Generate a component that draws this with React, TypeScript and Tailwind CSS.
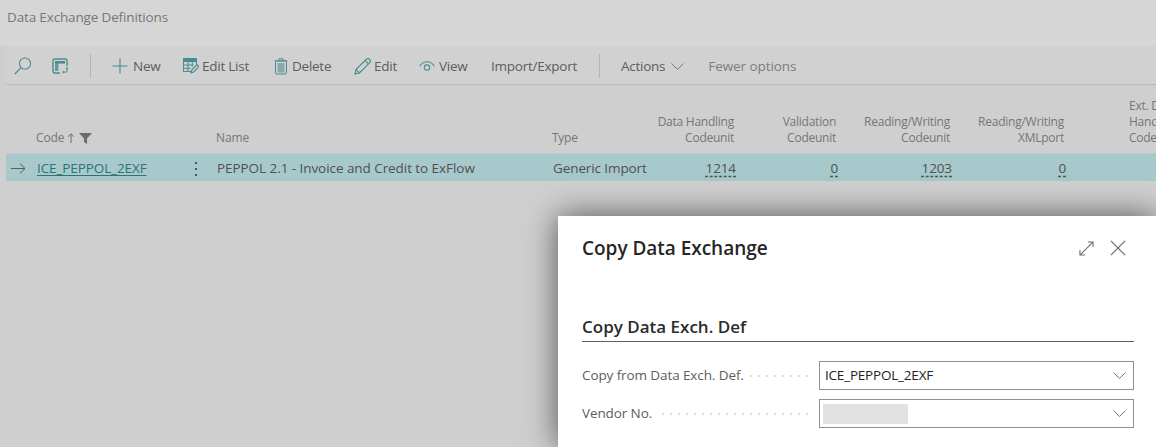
import React from "react";

const teal = "#4b8c90";

function Search() {
  return (
    <svg width="18" height="18" viewBox="0 0 18 18" fill="none" stroke={teal} strokeWidth="1.1">
      <circle cx="11" cy="6.6" r="5.6" />
      <path d="M7 10.6 L0.8 17" strokeWidth="1.3" />
    </svg>
  );
}
function Layout() {
  return (
    <svg width="16" height="16" viewBox="0 0 16 16" fill="none" stroke={teal} strokeWidth="1.4">
      <path d="M8 15H2.5A1.5 1.5 0 0 1 1 13.5v-11A1.5 1.5 0 0 1 2.5 1h11A1.5 1.5 0 0 1 15 2.5V8" />
      <rect x="3" y="3" width="10" height="2.6" fill={teal} stroke="none" />
      <rect x="3" y="3" width="3.4" height="10" fill={teal} stroke="none" opacity="0.8" />
      <path d="M15 9.5v3.6a1 1 0 0 1-1 1h-3M13.8 11l1.2-1.5 1 1.5M11.8 13l-1.3 1.1 1.3 1.1" strokeWidth="1" />
    </svg>
  );
}
function Plus() {
  return (
    <svg width="16" height="16" viewBox="0 0 16 16" stroke={teal} strokeWidth="1.1">
      <path d="M8 0.5V15.5M0.5 8H15.5" />
    </svg>
  );
}
function EditList() {
  return (
    <svg width="16" height="16" viewBox="0 0 16 16" fill="none" stroke={teal} strokeWidth="1">
      <path d="M8 13.5H.5V.5h13v6" />
      <rect x="0.5" y="0.5" width="13" height="3" fill={teal} />
      <path d="M.5 7h10M.5 10.3h7M5 3.5v10M9.3 3.5v5" />
      <path d="M8 14.8l.7-2.8 5.2-5.4 2 2-5.2 5.4z" fill="#d1d1d1" strokeWidth="1.2" />
    </svg>
  );
}
function Trash() {
  return (
    <svg width="14" height="17" viewBox="0 0 14 17" fill="none" stroke={teal} strokeWidth="1">
      <path d="M.5 2.8h13M5 2.6V.8h4v1.8" />
      <rect x="1.5" y="3" width="11" height="13" rx="1.2" />
      <rect x="3.5" y="5" width="7" height="9.5" fill={teal} opacity="0.55" stroke="none" />
    </svg>
  );
}
function Pencil() {
  return (
    <svg width="17" height="17" viewBox="0 0 17 17" fill="none" stroke={teal} strokeWidth="1.1">
      <path d="M1 16l1.1-4.6L12.6 1a1.7 1.7 0 0 1 2.4 0l.9.9a1.7 1.7 0 0 1 0 2.4L5.5 14.9z" />
      <path d="M2.1 11.4l3.4 3.5M11.2 2.5l3.3 3.3" />
    </svg>
  );
}
function Eye() {
  return (
    <svg width="16" height="11" viewBox="0 0 16 11" fill="none" stroke={teal} strokeWidth="1.1">
      <path d="M.6 5.2C2.4 2.2 5 .7 8 .7s5.6 1.5 7.4 4.5" />
      <circle cx="8" cy="6.6" r="2.7" />
    </svg>
  );
}
function Chevron({ color = "#7a7a7a", w = 13 }: { color?: string; w?: number }) {
  return (
    <svg width={w} height="7" viewBox="0 0 13 7" fill="none" stroke={color} strokeWidth="1">
      <path d="M.5.5l6 6 6-6" />
    </svg>
  );
}

function Tool({ icon, label, cls }: { icon?: React.ReactNode; label: string; cls: string }) {
  return (
    <div className={`flex items-center shrink-0 ${cls}`}>
      {icon}
      <span className="whitespace-nowrap">{label}</span>
    </div>
  );
}

function Head({ w, lines }: { w: string; lines: string[] }) {
  return (
    <div className={`${w} shrink-0 flex flex-col items-end text-right leading-[16px] text-[12px] tracking-[-0.25px] text-[#767676]`}>
      {lines.map((l) => (
        <span key={l} className="whitespace-nowrap">{l}</span>
      ))}
    </div>
  );
}

function Num({ w, v }: { w: string; v: string }) {
  return (
    <div className={`${w} shrink-0 text-right`}>
      <span className="underline decoration-dashed decoration-[#555] underline-offset-2">{v}</span>
    </div>
  );
}

function Field({ label, dotsW, children }: { label: string; dotsW: string; children?: React.ReactNode }) {
  return (
    <div className="flex items-center h-[29px]">
      <div className="w-[237px] shrink-0 flex items-center text-[13.5px] tracking-[-0.1px] text-[#5e5e5e] overflow-hidden">
        <span className="whitespace-nowrap">{label}</span>
        <span className={`${dotsW} ml-auto mr-[11px] h-[2px] bg-[linear-gradient(90deg,#dcdcdc_2px,transparent_2px)] bg-[length:8px_2px] bg-repeat-x`} />
      </div>
      <div className="flex-1 h-[29px] border border-[#8a8f99] flex items-center justify-between pl-[5px] pr-[7px] text-[13.5px] tracking-[-0.2px] text-[#222]">
        <div className="flex items-center">{children}</div>
        <Chevron w={13} color="#777" />
      </div>
    </div>
  );
}

export default function App() {
  return (
    <div
      className="relative w-[1156px] h-[447px] overflow-hidden bg-[#cfcfcf] text-[#555]"
      style={{ fontFamily: '"Open Sans", "Noto Sans", sans-serif' }}
    >
      <div className="h-[46px] bg-[#d6d6d6] pl-[7px] pt-[8px] text-[13.5px] leading-[18px] tracking-[-0.15px] text-[#767676]">
        Data Exchange Definitions
      </div>

      <div className="ml-[6px] h-[39px] pt-[2px] border-b border-[#b9b9bd] flex items-center text-[13.5px] tracking-[-0.25px] text-[#5d5d5d] bg-[#d1d1d1]">
        <div className="ml-[8px] w-[18px] flex"><Search /></div>
        <div className="ml-[20px] w-[16px] flex"><Layout /></div>
        <div className="ml-[22px] w-px h-[24px] bg-[#b5b5b5]" />
        <Tool cls="ml-[21px] gap-[5px] w-[71px]" icon={<Plus />} label="New" />
        <Tool cls="gap-[3px] w-[91px]" icon={<EditList />} label="Edit List" />
        <Tool cls="gap-[4px] w-[80px]" icon={<Trash />} label="Delete" />
        <Tool cls="gap-[3px] w-[65px]" icon={<Pencil />} label="Edit" />
        <Tool cls="gap-[4px] w-[72px]" icon={<Eye />} label="View" />
        <Tool cls="w-[108px]" label="Import/Export" />
        <div className="w-px h-[24px] bg-[#b5b5b5]" />
        <Tool cls="ml-[21px] gap-[6px]" label="Actions" />
        <div className="ml-[6px] mr-[24px] flex"><Chevron /></div>
        <Tool cls="w-[100px] text-[#7c7c7c] tracking-[-0.08px]" label="Fewer options" />
      </div>

      <div className="ml-[6px] h-[68px] flex items-end pb-[7px]">
        <div className="w-[30px] shrink-0" />
        <div className="w-[180px] shrink-0 flex items-center gap-[3px] text-[12px] leading-[16px] tracking-[-0.1px] text-[#767676]">
          <span>Code</span>
          <svg width="8" height="10" viewBox="0 0 8 10" fill="none" stroke="#6c6c6c" strokeWidth="1">
            <path d="M4 10V1M1 3.7L4 .8l3 2.9" />
          </svg>
          <svg width="13" height="11" viewBox="0 0 13 11" fill="#6c6c6c" className="ml-[1px]">
            <path d="M0 0h13L8 5.5V11L5 9V5.5z" />
          </svg>
        </div>
        <div className="w-[336px] shrink-0 text-[12px] leading-[16px] tracking-[-0.1px] text-[#767676]">Name</div>
        <div className="w-[100px] shrink-0 text-[12px] leading-[16px] tracking-[-0.25px] text-[#767676]">Type</div>
        <Head w="w-[82px]" lines={["Data Handling", "Codeunit"]} />
        <Head w="w-[102px]" lines={["Validation", "Codeunit"]} />
        <Head w="w-[114px]" lines={["Reading/Writing", "Codeunit"]} />
        <Head w="w-[114px]" lines={["Reading/Writing", "XMLport"]} />
        <div className="flex-1 min-w-0 pl-[65px] text-[12px] leading-[16px] tracking-[-0.25px] text-[#767676] whitespace-nowrap">
          <div className="w-[47px] text-right">Ext. Data</div>
          <div className="w-[47px] text-right">Handling</div>
          <div className="w-[47px] text-right">Codeunit</div>
        </div>
      </div>

      <div className="ml-[6px] h-[28px] pt-[2px] bg-[#a7c9cb] border-t border-[#bcc9ca] flex items-center text-[13.5px] tracking-[-0.1px] text-[#505050]">
        <div className="w-[31px] shrink-0 pl-[5px] flex">
          <svg width="15" height="11" viewBox="0 0 15 11" fill="none" stroke="#5c5c5c" strokeWidth="1">
            <path d="M0 5.5h14M9 .7l5 4.8-5 4.8" />
          </svg>
        </div>
        <div className="w-[149px] shrink-0 underline underline-offset-2 text-[#2d7377]">ICE_PEPPOL_2EXF</div>
        <div className="w-[31px] shrink-0 flex flex-col items-start gap-[4px] pl-[9px]">
          <span className="w-[2px] h-[2px] bg-[#555]" />
          <span className="w-[2px] h-[2px] bg-[#555]" />
          <span className="w-[2px] h-[2px] bg-[#555]" />
        </div>
        <div className="w-[336px] shrink-0 whitespace-nowrap tracking-[-0.06px]">PEPPOL 2.1 - Invoice and Credit to ExFlow</div>
        <div className="w-[100px] shrink-0 whitespace-nowrap">Generic Import</div>
        <Num w="w-[83px]" v="1214" />
        <Num w="w-[102px]" v="0" />
        <Num w="w-[114px]" v="1203" />
        <Num w="w-[114px]" v="0" />
      </div>

      <div className="absolute left-[558px] top-[216px] w-[598px] h-[231px] bg-white shadow-[0_0_30px_rgba(0,0,0,0.6)] pl-[24px] pr-[22px]">
        <div className="flex items-center justify-between h-[64px]">
          <h1 className="text-[19px] leading-[28px] tracking-[-0.03px] font-semibold text-[#262626]">Copy Data Exchange</h1>
          <div className="flex items-center gap-[16px] mr-[8px]">
            <svg width="15" height="15" viewBox="0 0 16 16" fill="none" stroke="#6a6a6a" strokeWidth="1.1">
              <path d="M1 15L15 1M9.5 1H15v5.5M1 9.5V15h5.5" />
            </svg>
            <svg width="16" height="16" viewBox="0 0 17 17" fill="none" stroke="#6a6a6a" strokeWidth="1.3">
              <path d="M1 1l15 15M16 1L1 16" />
            </svg>
          </div>
        </div>
        <div className="mt-[33px] h-[29px] pt-[2px] border-b border-[#5a6270] text-[17px] leading-[24px] font-semibold text-[#2b2b2b]">
          Copy Data Exch. Def
        </div>
        <div className="mt-[19px] flex flex-col gap-[9px]">
          <Field label="Copy from Data Exch. Def." dotsW="w-[58px]">ICE_PEPPOL_2EXF</Field>
          <Field label="Vendor No." dotsW="w-[146px]">
            <span className="-ml-[2px] w-[85px] h-[20px] bg-[#e1e2e2] block" />
          </Field>
        </div>
      </div>
    </div>
  );
}
